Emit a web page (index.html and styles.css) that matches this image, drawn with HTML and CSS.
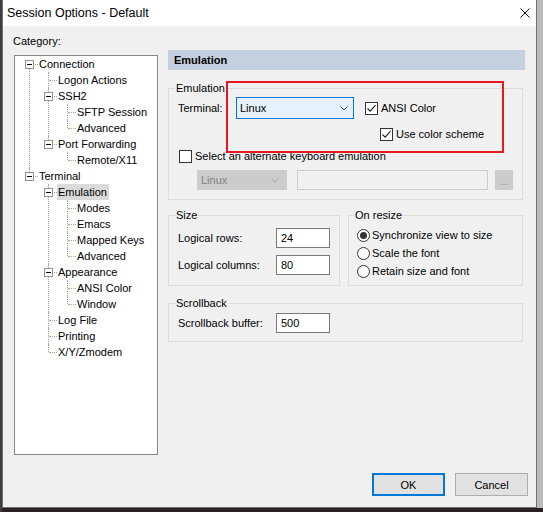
FILE: index.html
```html
<!DOCTYPE html>
<html lang="en">
<head>
    <meta charset="UTF-8">
    <title>Session Options - Default</title>
    <link rel="stylesheet" href="styles.css">
</head>
<body>
    <div class="window">
        <div class="titlebar">
            <span class="title">Session Options - Default</span>
            <svg class="close" viewBox="0 0 10 10"><path d="M0.5 0.5 L9.5 9.5 M9.5 0.5 L0.5 9.5" stroke="#111" stroke-width="1"/></svg>
        </div>

        <div class="main">
            <div class="side">
                <div class="side-label">Category:</div>
                <div class="treebox">
                    <ul class="tree">
                        <li>
                            <div class="row"><span class="tw"><i class="box"></i></span><span class="lbl">Connection</span></div>
                            <ul>
                                <li><div class="row"><span class="tw"></span><span class="lbl">Logon Actions</span></div></li>
                                <li>
                                    <div class="row"><span class="tw"><i class="box"></i></span><span class="lbl">SSH2</span></div>
                                    <ul>
                                        <li><div class="row"><span class="tw"></span><span class="lbl">SFTP Session</span></div></li>
                                        <li><div class="row"><span class="tw"></span><span class="lbl">Advanced</span></div></li>
                                    </ul>
                                </li>
                                <li>
                                    <div class="row"><span class="tw"><i class="box"></i></span><span class="lbl">Port Forwarding</span></div>
                                    <ul>
                                        <li><div class="row"><span class="tw"></span><span class="lbl">Remote/X11</span></div></li>
                                    </ul>
                                </li>
                            </ul>
                        </li>
                        <li>
                            <div class="row"><span class="tw"><i class="box"></i></span><span class="lbl">Terminal</span></div>
                            <ul>
                                <li>
                                    <div class="row"><span class="tw"><i class="box"></i></span><span class="lbl selected">Emulation</span></div>
                                    <ul>
                                        <li><div class="row"><span class="tw"></span><span class="lbl">Modes</span></div></li>
                                        <li><div class="row"><span class="tw"></span><span class="lbl">Emacs</span></div></li>
                                        <li><div class="row"><span class="tw"></span><span class="lbl">Mapped Keys</span></div></li>
                                        <li><div class="row"><span class="tw"></span><span class="lbl">Advanced</span></div></li>
                                    </ul>
                                </li>
                                <li>
                                    <div class="row"><span class="tw"><i class="box"></i></span><span class="lbl">Appearance</span></div>
                                    <ul>
                                        <li><div class="row"><span class="tw"></span><span class="lbl">ANSI Color</span></div></li>
                                        <li><div class="row"><span class="tw"></span><span class="lbl">Window</span></div></li>
                                    </ul>
                                </li>
                                <li><div class="row"><span class="tw"></span><span class="lbl">Log File</span></div></li>
                                <li><div class="row"><span class="tw"></span><span class="lbl">Printing</span></div></li>
                                <li><div class="row"><span class="tw"></span><span class="lbl">X/Y/Zmodem</span></div></li>
                            </ul>
                        </li>
                    </ul>
                </div>
            </div>

            <div class="panel">
                <div class="panel-head">Emulation</div>

                <fieldset class="group emu">
                    <legend>Emulation</legend>
                    <div class="term-row">
                        <span class="lab">Terminal:</span>
                        <div class="combo">
                            <span>Linux</span>
                            <svg class="chev" viewBox="0 0 8 5"><path d="M0.5 0.5 L4 4 L7.5 0.5" fill="none" stroke="#444"/></svg>
                        </div>
                        <label class="check-label">
                            <span class="check"><svg viewBox="0 0 11 11"><path d="M1.5 5.5 L4.2 8.2 L9.5 2.2" fill="none" stroke="#222" stroke-width="1.1"/></svg></span>
                            ANSI Color
                        </label>
                    </div>
                    <label class="check-label scheme-row">
                        <span class="check"><svg viewBox="0 0 11 11"><path d="M1.5 5.5 L4.2 8.2 L9.5 2.2" fill="none" stroke="#222" stroke-width="1.1"/></svg></span>
                        Use color scheme
                    </label>
                    <label class="check-label alt-row">
                        <span class="check"></span>
                        Select an alternate keyboard emulation
                    </label>
                    <div class="alt-fields">
                        <div class="combo off">
                            <span>Linux</span>
                            <svg class="chev" viewBox="0 0 8 5"><path d="M0.5 0.5 L4 4 L7.5 0.5" fill="none" stroke="#a8a8a8"/></svg>
                        </div>
                        <div class="text-off"></div>
                        <div class="dots-off">...</div>
                    </div>
                </fieldset>

                <div class="group-row">
                    <fieldset class="group size">
                        <legend>Size</legend>
                        <div class="field-row">
                            <span class="lab">Logical rows:</span>
                            <div class="input">24</div>
                        </div>
                        <div class="field-row">
                            <span class="lab">Logical columns:</span>
                            <div class="input">80</div>
                        </div>
                    </fieldset>
                    <fieldset class="group resize">
                        <legend>On resize</legend>
                        <label class="radio-label"><span class="radio on"></span>Synchronize view to size</label>
                        <label class="radio-label"><span class="radio"></span>Scale the font</label>
                        <label class="radio-label"><span class="radio"></span>Retain size and font</label>
                    </fieldset>
                </div>

                <fieldset class="group scroll">
                    <legend>Scrollback</legend>
                    <div class="field-row">
                        <span class="lab">Scrollback buffer:</span>
                        <div class="input">500</div>
                    </div>
                </fieldset>
            </div>
        </div>

        <div class="buttons">
            <button class="btn default">OK</button>
            <button class="btn">Cancel</button>
        </div>

        <div class="callout"></div>
    </div>
</body>
</html>
```

FILE: styles.css
```css
body {
    margin: 0;
    height: 512px;
    font-family: 'Liberation Sans', Arial, sans-serif;
    font-size: 11px;
    color: #000;
    background:
        linear-gradient(to right, #3d3d3d 2px, transparent 2px),
        linear-gradient(to bottom, #b9b9b9 508px, #2a2326 508px);
}
.window {
    position: relative;
    display: flex;
    flex-direction: column;
    width: 535px;
    height: 508px;
    margin-left: 2px;
    box-sizing: border-box;
    border: 1px solid #707070;
    border-top: 0;
    background: #f0f0f0;
}
.titlebar {
    display: flex;
    align-items: center;
    height: 26px;
    padding-left: 4px;
    background: #fff;
    font-size: 12.5px;
}
.close {
    width: 10px;
    height: 10px;
    margin-left: auto;
    margin-right: 6px;
}
.main {
    display: flex;
    gap: 10px;
    padding: 8px 11px 0;
}

/* category tree */
.side {
    width: 144px;
}
.side-label {
    line-height: 14px;
    margin: 0 0 7px -1px;
}
.treebox {
    height: 400px;
    box-sizing: border-box;
    border: 1px solid #828790;
    background: #fff;
    padding-left: 5px;
}
.tree, .tree ul {
    list-style: none;
    margin: 0;
    padding: 0;
}
.tree ul {
    padding-left: 19px;
}
.tree li {
    position: relative;
}
.tree li::before {
    content: '';
    position: absolute;
    left: 9px;
    top: 0;
    bottom: 0;
    border-left: 1px dotted #a0a0a0;
}
.tree li:last-child::before {
    bottom: auto;
    height: 8px;
}
.tree > li:first-child::before {
    top: 8px;
}
.row {
    display: flex;
    align-items: center;
    height: 16px;
}
.tw {
    position: relative;
    flex: none;
    width: 19px;
    height: 16px;
}
.tw::before {
    content: '';
    position: absolute;
    left: 10px;
    top: 8px;
    width: 8px;
    border-top: 1px dotted #a0a0a0;
}
.box {
    position: absolute;
    z-index: 1;
    left: 5px;
    top: 4px;
    width: 9px;
    height: 9px;
    box-sizing: border-box;
    border: 1px solid #919191;
    background: #fff;
}
.box::after {
    content: '';
    position: absolute;
    left: 1px;
    top: 3px;
    width: 5px;
    height: 1px;
    background: #000;
}
.lbl {
    position: relative;
    z-index: 1;
    margin-left: -1px;
    padding: 0 2px 0 1px;
    line-height: 16px;
    white-space: nowrap;
}
.lbl.selected {
    background: #dadada;
}

/* right panel */
.panel {
    width: 357px;
    margin-top: 16px;
}
.panel-head {
    height: 20px;
    line-height: 20px;
    padding-left: 6px;
    background: #c4d0dd;
    font-weight: bold;
}
.group {
    margin: 0;
    padding: 0 9px;
    border: 1px solid #dcdcdc;
    min-width: 0;
}
.group legend {
    margin-left: -3px;
    padding: 0 1px;
    line-height: 14px;
}
.panel > .group, .group-row {
    margin-right: 2px;
}
.emu {
    margin-top: 11px;
    padding-top: 2px;
    padding-bottom: 9px;
}
.term-row {
    display: flex;
    align-items: center;
    height: 22px;
}
.term-row .lab {
    width: 58px;
}
.combo {
    display: flex;
    align-items: center;
    justify-content: space-between;
    width: 118px;
    height: 22px;
    box-sizing: border-box;
    padding: 0 5px 0 3px;
    border: 1px solid #0078d7;
    background: #e5f1fb;
}
.chev {
    width: 8px;
    height: 5px;
}
.check-label {
    display: flex;
    align-items: center;
    gap: 3px;
    height: 16px;
}
.term-row .check-label {
    margin-left: 11px;
}
.check {
    flex: none;
    width: 13px;
    height: 13px;
    box-sizing: border-box;
    border: 1px solid #333;
    background: #fff;
}
.check svg {
    display: block;
    width: 11px;
    height: 11px;
}
.scheme-row {
    margin: 7px 0 0 202px;
}
.alt-row {
    margin: 6px 0 0 1px;
}
.alt-fields {
    display: flex;
    height: 20px;
    margin: 6px 0 0 19px;
}
.combo.off {
    width: 90px;
    height: 20px;
    border-color: #cccccc;
    background: #cccccc;
    color: #838383;
    padding-right: 7px;
}
.text-off {
    width: 191px;
    margin-left: 10px;
    box-sizing: border-box;
    border: 1px solid #cccccc;
    background: #f0f0f0;
}
.dots-off {
    width: 18px;
    margin-left: 7px;
    background: #cccccc;
    color: #8a8a8a;
    text-align: center;
    line-height: 22px;
}
.group-row {
    display: flex;
    gap: 8px;
    margin-top: 8px;
}
.size {
    flex: none;
    width: 172px;
    box-sizing: border-box;
    padding: 6px 9px 10px;
}
.field-row {
    display: flex;
    align-items: center;
    height: 20px;
}
.field-row + .field-row {
    margin-top: 7px;
}
.field-row .lab {
    width: 98px;
}
.input {
    width: 54px;
    height: 20px;
    box-sizing: border-box;
    padding-left: 4px;
    border: 1px solid #7a7a7a;
    background: #fff;
    line-height: 18px;
}
.resize {
    flex: 1;
    padding: 4px 8px 0;
}
.radio-label {
    display: flex;
    align-items: center;
    gap: 2px;
    height: 18px;
}
.radio {
    position: relative;
    flex: none;
    width: 13px;
    height: 13px;
    box-sizing: border-box;
    border: 1px solid #333;
    border-radius: 50%;
    background: #fff;
}
.radio.on::after {
    content: '';
    position: absolute;
    left: 2px;
    top: 2px;
    width: 7px;
    height: 7px;
    border-radius: 50%;
    background: #333;
}
.scroll {
    margin-top: 10px;
    padding-top: 3px;
    padding-bottom: 8px;
}

/* dialog buttons */
.buttons {
    display: flex;
    justify-content: flex-end;
    gap: 10px;
    margin-top: auto;
    padding: 0 8px 11px 0;
}
.btn {
    width: 73px;
    height: 23px;
    border: 1px solid #adadad;
    background: #e1e1e1;
    font: inherit;
    color: #000;
}
.btn.default {
    border: 2px solid #0078d7;
}

/* red annotation box */
.callout {
    position: absolute;
    left: 223px;
    top: 81px;
    width: 278px;
    height: 72px;
    box-sizing: border-box;
    border: 2px solid #e8161f;
    pointer-events: none;
}
```
